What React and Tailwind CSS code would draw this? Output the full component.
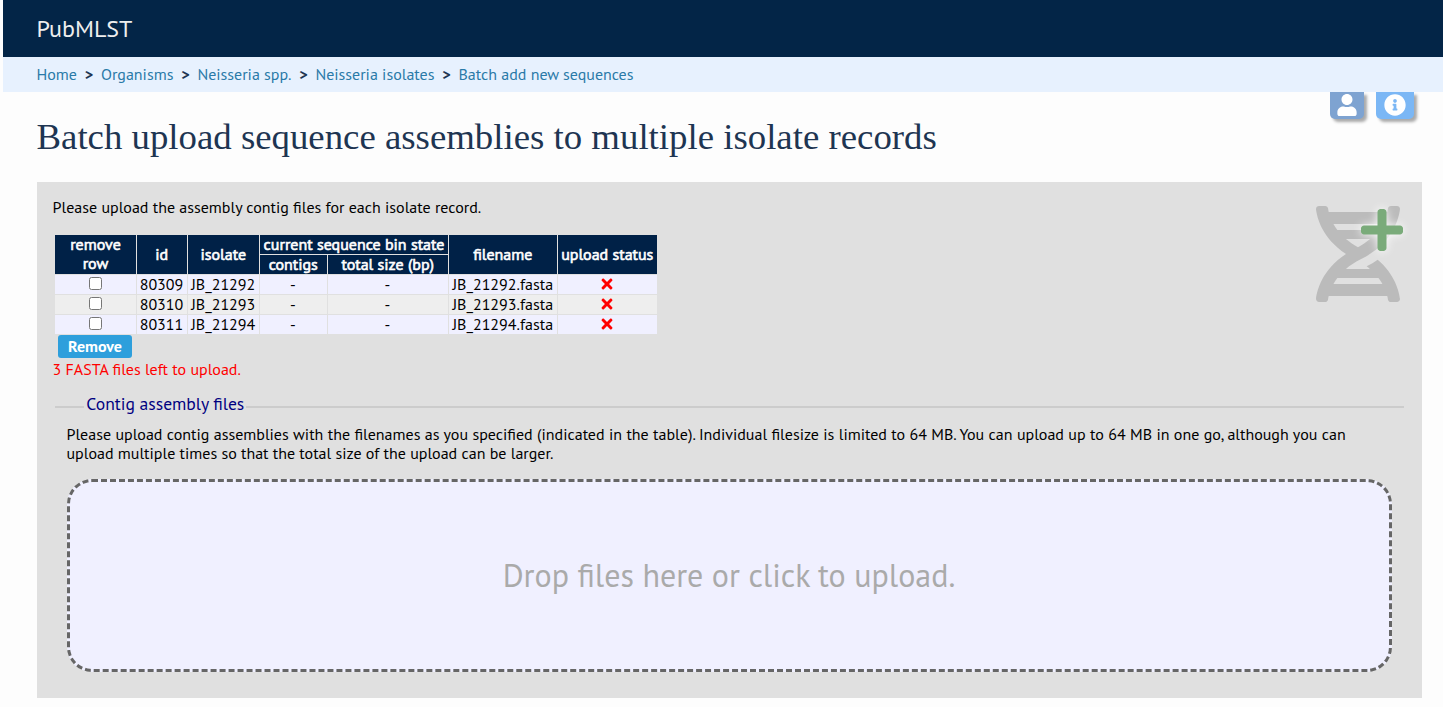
import React from "react";
import { FaDna, FaPlus, FaTimes, FaUser, FaInfoCircle } from "react-icons/fa";

const crumbs = ["Home", "Organisms", "Neisseria spp.", "Neisseria isolates", "Batch add new sequences"];

const rows = [
  { id: "80309", isolate: "JB_21292" },
  { id: "80310", isolate: "JB_21293" },
  { id: "80311", isolate: "JB_21294" },
];

function Header() {
  return (
    <header className="ml-[3px]">
      <div className="flex h-[57px] items-center bg-[#032547] pl-[33.5px] text-2xl text-[#eee]">PubMLST</div>
      <nav className="flex h-[35px] items-center bg-[#e7f1fe] pl-[33.5px]">
        {crumbs.map((c, i) => (
          <React.Fragment key={c}>
            {i > 0 && <span className="w-6 text-center font-bold text-[#1e3552]">&gt;</span>}
            <a className="text-[#2a7aa8]">{c}</a>
          </React.Fragment>
        ))}
      </nav>
    </header>
  );
}

function Table() {
  return (
    <table className="ml-[1.4px] table-fixed border-separate border-spacing-px w-[604px] text-center">
      <colgroup>
        <col className="w-[81px]" />
        <col className="w-[50px]" />
        <col className="w-[71px]" />
        <col className="w-[67px]" />
        <col className="w-[120px]" />
        <col className="w-[108px]" />
        <col className="w-[99px]" />
      </colgroup>
      <thead className="text-white [-webkit-text-stroke:0.6px_white]">
        <tr className="h-[19px]">
          <th rowSpan={2} className="bg-[#002147] px-3 pt-0 pb-[2px] font-normal">
            <div className="-mt-px -mb-px">remove row</div>
          </th>
          <th rowSpan={2} className="bg-[#002147] py-0 pr-[0.5px] pl-0 font-normal">id</th>
          <th rowSpan={2} className="bg-[#002147] py-0 pr-[0.5px] pl-0 font-normal">isolate</th>
          <th colSpan={2} className="bg-[#002147] p-0 font-normal whitespace-nowrap">current sequence bin state</th>
          <th rowSpan={2} className="bg-[#002147] py-0 pr-[0.5px] pl-0 font-normal">filename</th>
          <th rowSpan={2} className="bg-[#002147] py-0 pr-[0.5px] pl-0 font-normal whitespace-nowrap">upload status</th>
        </tr>
        <tr className="h-[19px]">
          <th className="bg-[#002147] py-0 pr-[0.5px] pl-0 font-normal">contigs</th>
          <th className="bg-[#002147] py-0 pr-[0.5px] pl-0 font-normal">total size (bp)</th>
        </tr>
      </thead>
      <tbody>
        {rows.map((r) => (
          <tr key={r.id} className="h-[19px] bg-[#f0f0ff] even:bg-[#eee]">
            <td className="p-0">
              <div className="flex h-[19px] justify-center pt-[2px]">
                <input type="checkbox" className="size-[13px]" />
              </div>
            </td>
            <td className="py-0 pr-px pl-0">{r.id}</td>
            <td className="py-0 pr-[0.5px] pl-0">{r.isolate}</td>
            <td className="py-0 pr-px pl-0">-</td>
            <td className="py-0 pr-px pl-0">-</td>
            <td className="py-0 pr-[0.5px] pl-0">{r.isolate}.fasta</td>
            <td className="pt-0 pr-[2px] pb-[2px] pl-0">
              <FaTimes className="mx-auto size-4 text-[#f00]" />
            </td>
          </tr>
        ))}
      </tbody>
    </table>
  );
}

export default function App() {
  return (
    <div className="h-[707px] overflow-hidden bg-[#fdfdfd] font-['PT_Sans','Noto_Sans',sans-serif] text-base leading-[19px] text-black">
      <Header />
      <div className="relative">
        <div className="absolute top-0 right-[29px] flex gap-3">
          <div className="flex h-[27px] w-[34px] justify-center rounded-b-[5px] bg-[#7ea3d1] pt-[2px] text-white shadow-[3px_3px_3px_#aaa] [clip-path:inset(0_-10px_-10px_-10px)]">
            <FaUser className="h-[22px] w-[20px]" />
          </div>
          <div className="flex h-[27px] w-[38px] justify-center rounded-b-[5px] bg-[#7bb7f5] pt-[2px] text-white shadow-[3px_3px_3px_#aaa] [clip-path:inset(0_-10px_-10px_-10px)]">
            <FaInfoCircle className="size-[22px]" />
          </div>
        </div>
        <h1 className="pt-[23px] pl-[36.5px] font-['Liberation_Serif',serif] text-[36.8px] leading-[44px] text-[#1e3552]">
          Batch upload sequence assemblies to multiple isolate records
        </h1>
      </div>
      <main className="relative mt-[23px] mr-[21px] ml-[37px] h-[516px] bg-[#e0e0e0] pt-4 pr-[18px] pl-[15.6px]">
        <div className="absolute top-6 right-[22.4px] h-24 w-[84px]">
          <FaDna className="h-24 w-[84px] text-[#bbb]" />
          <FaPlus className="absolute top-0 left-[45px] h-12 w-[42px] text-[#7aab7a] [filter:drop-shadow(0_0_5px_#fff)]" />
        </div>
        <p>Please upload the assembly contig files for each isolate record.</p>
        <div className="mt-[17px]">
          <Table />
        </div>
        <button className="ml-[5.4px] block h-[23px] w-[74px] rounded-[3px] bg-[#2e9fdc] text-center font-bold text-white">Remove</button>
        <p className="mt-[2px] text-[#f00]">3 FASTA files left to upload.</p>
        <fieldset className="mt-[14px] ml-[2.4px] border-t-2 border-[#ccc] pl-[11.5px]">
          <legend className="ml-[17.8px] px-[2px] pb-[7px] text-[17.6px] leading-[21px] text-[navy]">Contig assembly files</legend>
          <p className="mt-1 pr-3 first-line:[word-spacing:0.11px]">
            Please upload contig assemblies with the filenames as you specified (indicated in the table). Individual filesize is limited to 64 MB. You can upload up to 64 MB in one go, although you can upload multiple times so that the total size of the upload can be larger.
          </p>
          <div className="mt-4 mr-3 ml-[0.5px] flex h-[193px] items-center justify-center rounded-[25px] border-3 border-dashed border-[#666] bg-[#f0f0ff] pr-px text-[32px] text-[#aaa]">
            Drop files here or click to upload.
          </div>
        </fieldset>
      </main>
    </div>
  );
}
